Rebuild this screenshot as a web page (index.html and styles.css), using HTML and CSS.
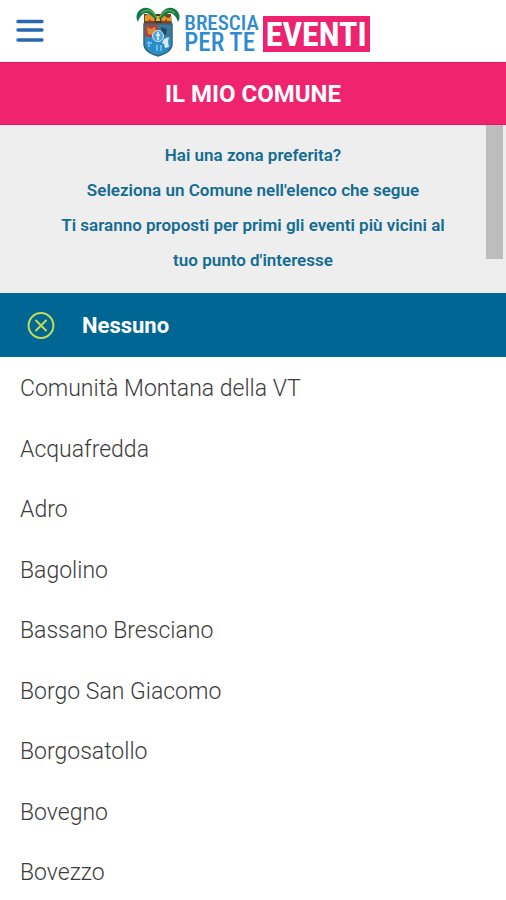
FILE: index.html
```html
<!DOCTYPE html>
<html lang="it">
<head>
<meta charset="utf-8">
<meta name="viewport" content="width=device-width, initial-scale=1">
<title>Brescia per te Eventi</title>
<link rel="stylesheet" href="styles.css">
</head>
<body>
<header class="topbar">
  <button class="menu" type="button" aria-label="Menu">
    <svg width="28" height="24" viewBox="0 0 28 24" aria-hidden="true">
      <path d="M2 2.5H26M2 11H26M2 21H26" fill="none" stroke="#2a67ae" stroke-width="3.4" stroke-linecap="round"/>
    </svg>
  </button>
  <a class="brand" href="#">
    <svg class="crest" width="44" height="52" viewBox="0 0 44 52" aria-hidden="true">
      <path d="M8 9H35L36 21H8Z" fill="#71451f"/>
      <path d="M9 11q4-4 7 0t6 0q4-4 7 0t6 0v5H9z" fill="#e2982a"/>
      <path d="M13 14l4 3-4 3zM31 14l-4 3 4 3z" fill="#b52d20"/>
      <path d="M18 9h8l-1 9h-6z" fill="#51351f"/>
      <path d="M20 11h4v5h-4z" fill="#e6b33c"/>
      <path d="M21 14C19 3 8-1 2 7C0 10 0 14 2 17C4 10 9 6 13 9C17 11 18 14 21 14Z" fill="#14774b"/>
      <path d="M23 14C25 3 36-1 42 7C44 10 44 14 42 17C40 10 35 6 31 9C27 11 26 14 23 14Z" fill="#14774b"/>
      <path d="M5 8Q14 1 20 12M39 8Q30 1 24 12" fill="none" stroke="#58a94c" stroke-width="1.5"/>
      <path d="M8 19H36V39Q36 47 22 51Q8 47 8 39Z" fill="#2a8ec6" stroke="#356477" stroke-width="1.5"/>
      <path d="M9 20H22V32H9Z" fill="#b6413f"/>
      <path d="M11 22l4 2 4-2 1 4-3 4-5-1z" fill="#d88c36"/>
      <path d="M22 20H35V32H22Z" fill="#397b9b"/>
      <path d="M25 22l6 2-1 6-4-1z" fill="#244a62"/>
      <circle cx="22" cy="31" r="5.5" fill="#4fa6dd" stroke="#d0e6ed"/>
      <path d="M22 27v8M20 30h4" stroke="#e8f5fa" stroke-width="1.5"/>
      <path d="M28 34l5-2-1 5 1 5-4 1-1-4-2-1z" fill="#d9e9ef"/>
      <path d="M13 36v6M11 38h5M21 40v6M25 40v6" stroke="#69bce5" stroke-width="2"/>
    </svg>
    <span class="name"><span class="brescia">BRESCIA</span><span class="perte">PER TE</span></span>
    <span class="tag">EVENTI</span>
  </a>
</header>
<main class="page">
  <h1 class="title">IL MIO COMUNE</h1>
  <section class="intro">
    <p>Hai una zona preferita?</p>
    <p>Seleziona un Comune nell'elenco che segue</p>
    <p>Ti saranno proposti per primi gli eventi più vicini al tuo punto d'interesse</p>
    <div class="thumb"></div>
  </section>
  <button class="none" type="button">
    <svg width="28" height="28" viewBox="0 0 28 28" aria-hidden="true">
      <g fill="none" stroke="#c5d957" stroke-width="2" stroke-linecap="round">
        <circle cx="14" cy="13.5" r="12.4"/>
        <path d="M9 8.5L19 18.5M19 8.5L9 18.5"/>
      </g>
    </svg>
    <span>Nessuno</span>
  </button>
  <ul class="towns">
    <li><a href="#">Comunità Montana della VT</a></li>
    <li><a href="#">Acquafredda</a></li>
    <li><a href="#">Adro</a></li>
    <li><a href="#">Bagolino</a></li>
    <li><a href="#">Bassano Bresciano</a></li>
    <li><a href="#">Borgo San Giacomo</a></li>
    <li><a href="#">Borgosatollo</a></li>
    <li><a href="#">Bovegno</a></li>
    <li><a href="#">Bovezzo</a></li>
  </ul>
</main>
</body>
</html>
```
FILE: styles.css
```css
* { box-sizing: border-box; }
body {
  display: flex;
  flex-direction: column;
  min-height: 100vh;
  margin: 0;
  background: #fff;
  font-family: Roboto, "Liberation Sans", sans-serif;
}
button {
  padding: 0;
  border: 0;
  background: none;
  font-family: inherit;
  cursor: pointer;
}
a { color: inherit; text-decoration: none; }
svg { display: block; }
.topbar {
  display: grid;
  grid-template-columns: 1fr auto 1fr;
  align-items: center;
  padding: 5px 16px;
}
.menu { justify-self: start; }
.brand { display: flex; align-items: flex-end; gap: 4px; }
.name {
  display: flex;
  flex-direction: column;
  padding-bottom: 4px;
  color: #2f8bd0;
  font-family: "Roboto Condensed", Roboto, sans-serif;
  font-weight: 500;
  line-height: 20px;
  white-space: nowrap;
}
.brescia { font-size: 21px; }
.perte { font-size: 25px; }
.tag {
  margin-bottom: 5px;
  padding: 0 3px;
  background: #ed2370;
  color: #fff;
  font-family: "Roboto Condensed", Roboto, sans-serif;
  font-size: 34px;
  line-height: 36px;
  font-weight: 700;
}
.page { display: flex; flex: 1; flex-direction: column; }
.title {
  margin: 0;
  padding-top: 1px;
  background: #f0246e;
  border: solid #e9145f;
  border-width: 1px 0;
  color: #fff;
  font-size: 24px;
  line-height: 60px;
  font-weight: 700;
  text-align: center;
}
.intro {
  position: relative;
  padding: 13px 48px 15px;
  background: #eee;
  color: #146c92;
  font-size: 17px;
  line-height: 35px;
  font-weight: 600;
  text-align: center;
}
.intro p { margin: 0; }
.thumb {
  position: absolute;
  top: 0;
  right: 3px;
  width: 17px;
  height: 80%;
  background: #bdbdbd;
}
.none {
  display: flex;
  align-items: center;
  gap: 27px;
  padding: 1px 27px 0;
  background: #006794;
  color: #fff;
  font-size: 22px;
  line-height: 63px;
  font-weight: 700;
}
.towns {
  display: grid;
  flex: 1;
  align-content: space-between;
  margin: 0;
  padding: 5px 0 0;
  color: #3c3c3c;
  font-size: 23px;
  line-height: 54px;
  font-weight: 300;
  list-style: none;
}
.towns a { display: block; padding: 0 20px; }
```
